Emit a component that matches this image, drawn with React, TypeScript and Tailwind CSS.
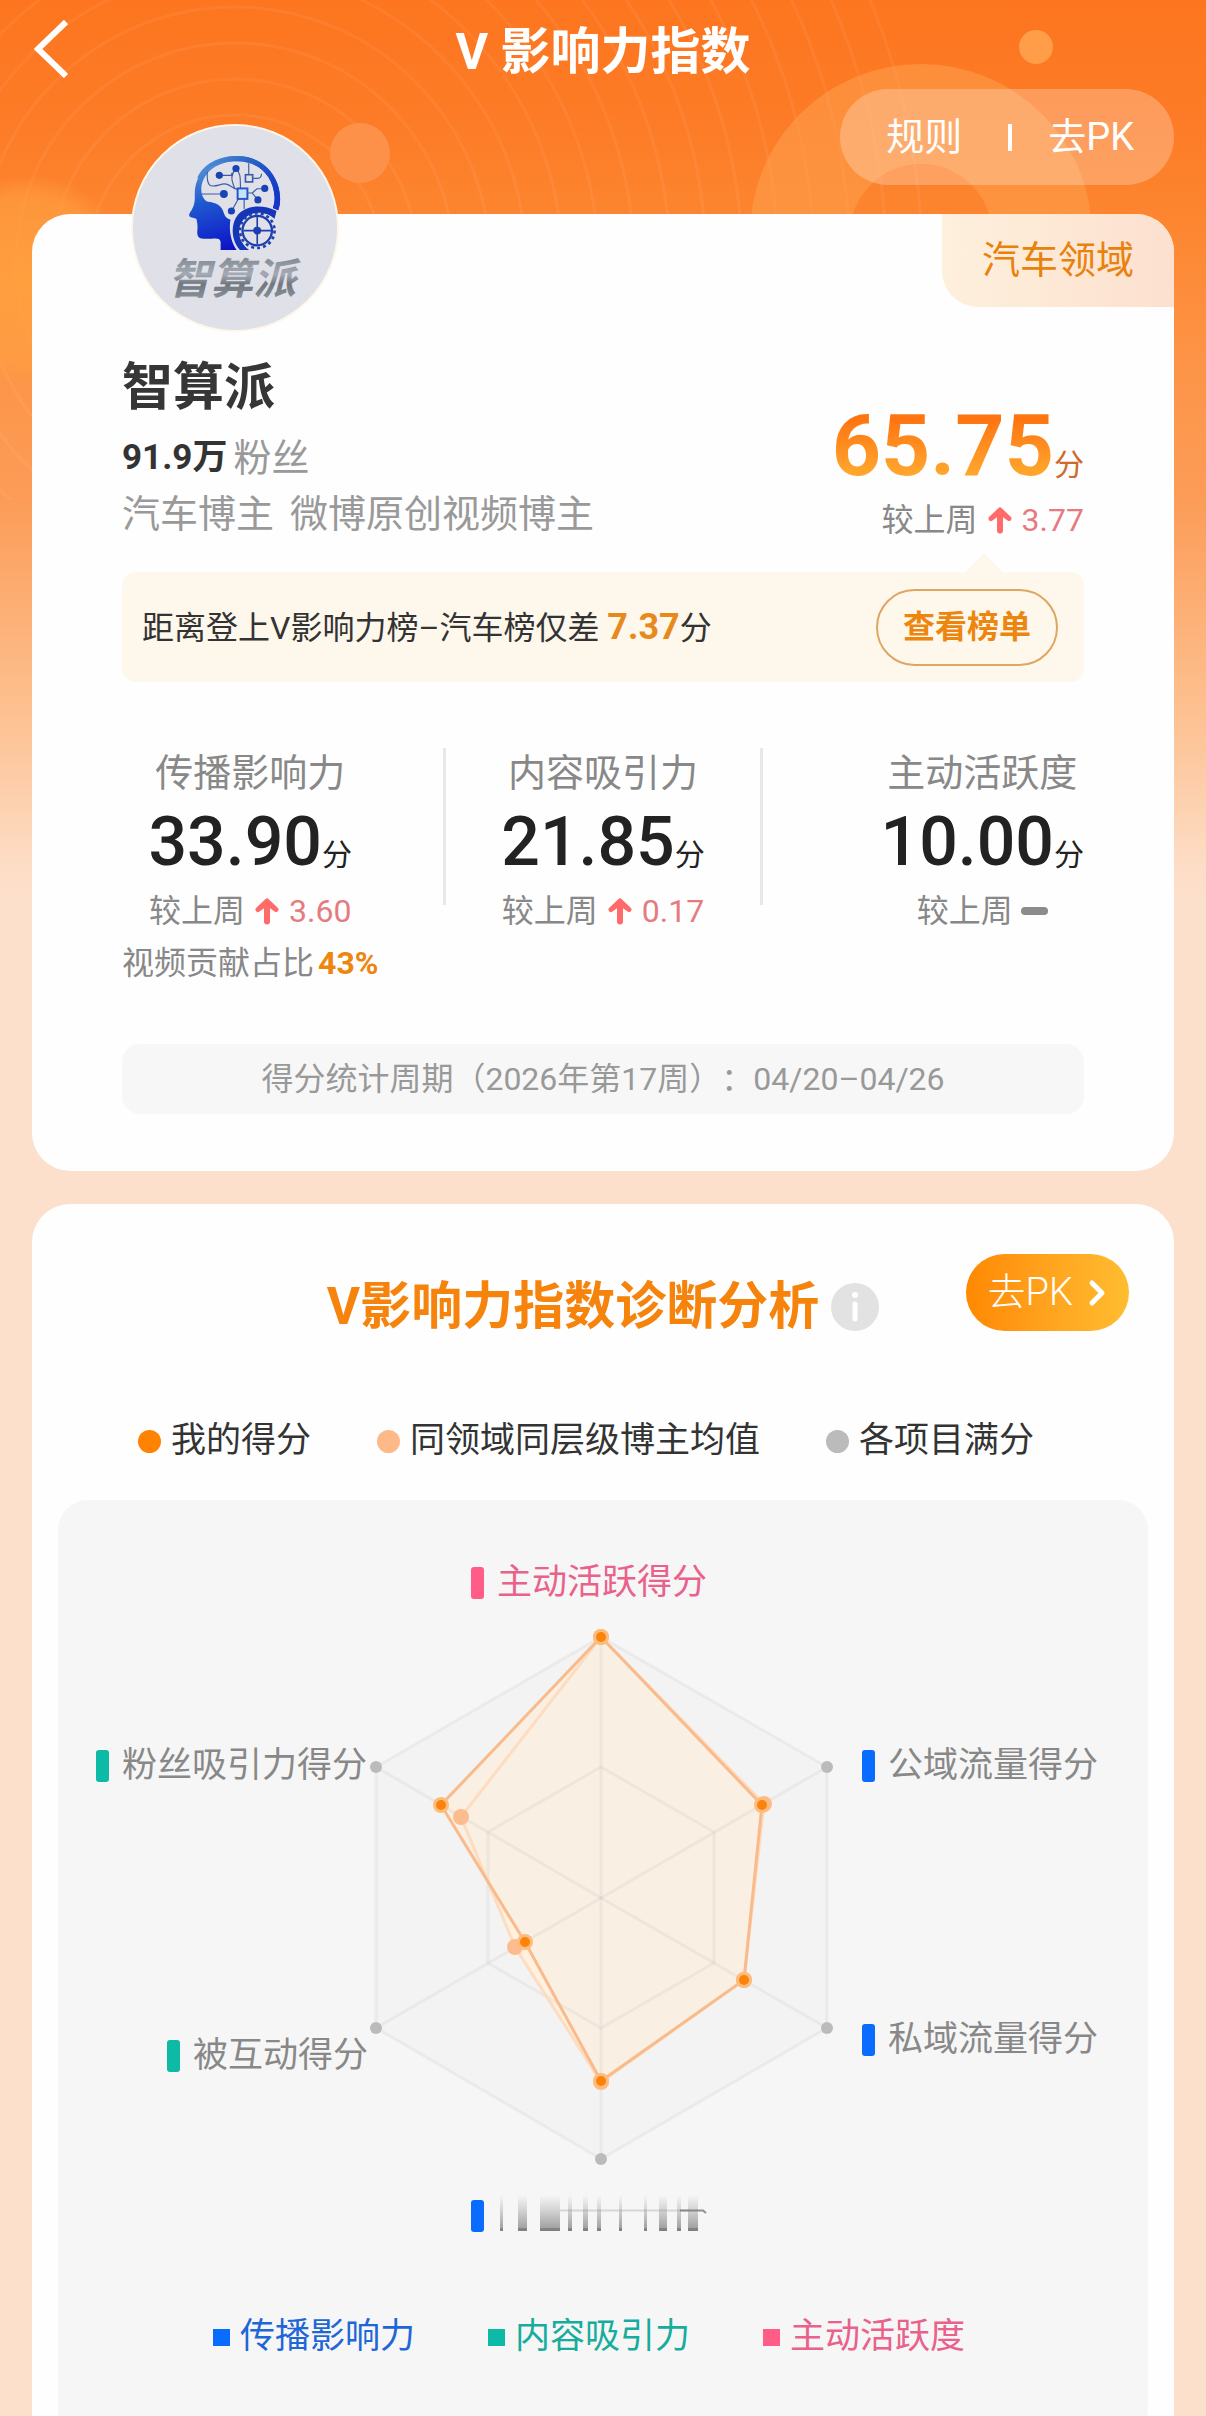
import { ChevronRight } from "lucide-react";

interface Metric {
  label: string;
  value: string;
  change: string | null;
}

interface LegendItem {
  label: string;
  dot: string;
  text: string;
}

interface AxisLabel {
  label: string;
  x: number;
  y: number;
  marker: string;
  color: string;
}

const metrics: Metric[] = [
  { label: "传播影响力", value: "33.90", change: "3.60" },
  { label: "内容吸引力", value: "21.85", change: "0.17" },
  { label: "主动活跃度", value: "10.00", change: null },
];

const scoreLegend: LegendItem[] = [
  { label: "我的得分", dot: "bg-[#ff8200]", text: "text-[#333333]" },
  { label: "同领域同层级博主均值", dot: "bg-[#fdb988]", text: "text-[#333333]" },
  { label: "各项目满分", dot: "bg-[#bbbbbb]", text: "text-[#333333]" },
];

const groupLegend: LegendItem[] = [
  { label: "传播影响力", dot: "bg-[#0a6cff]", text: "text-[#1f66d6]" },
  { label: "内容吸引力", dot: "bg-[#0cbaa6]", text: "text-[#17ac9c]" },
  { label: "主动活跃度", dot: "bg-[#ff5c87]", text: "text-[#e8628c]" },
];

const axisLabels: AxisLabel[] = [
  { label: "主动活跃得分", x: 413, y: 81, marker: "#ff5c87", color: "#e8628c" },
  { label: "公域流量得分", x: 804, y: 264, marker: "#0a6cff", color: "#888888" },
  { label: "私域流量得分", x: 804, y: 538, marker: "#0a6cff", color: "#888888" },
  { label: "被互动得分", x: 109, y: 554, marker: "#0cbaa6", color: "#888888" },
  { label: "粉丝吸引力得分", x: 38, y: 264, marker: "#0cbaa6", color: "#888888" },
];

const fullPoints = [[543, 137], [769, 267], [769, 528], [543, 659], [318, 528], [318, 267]];
const halfPoints = [[543, 267], [656, 332], [656, 463], [543, 528], [430, 463], [430, 332]];
const myPoints = [[543, 137], [704, 305], [686, 480], [543, 581], [467, 442], [383, 305]];
const averagePoints = [[543, 137], [706, 304], [686, 480], [543, 582], [457, 447], [403, 317]];

// Columns of the hidden sixth axis label: [x, width]
const smearBars = [
  [500, 3], [518, 9], [540, 20], [568, 4], [583, 5], [597, 4],
  [619, 3], [644, 3], [659, 8], [677, 4], [688, 10],
];

const toPath = (points: number[][]) => points.map((p) => p.join(",")).join(" ");

function Backdrop() {
  return (
    <div className="absolute inset-x-0 top-0 h-[900px] overflow-hidden bg-[linear-gradient(180deg,#fd751f_0px,#fd7c27_130px,#fd852f_213px,#fd9345_350px,#fc9c58_500px,#fdbd8a_690px,#fdc599_740px,#fddcc4_860px,#fde0cc_900px)]">
      <svg className="absolute top-0 left-0" width="1206" height="500" viewBox="0 0 1206 500" aria-hidden="true">
        <defs>
          <radialGradient id="glow">
            <stop offset="0" stopColor="#ffa23f" stopOpacity="0.9" />
            <stop offset="0.8" stopColor="#ffa042" stopOpacity="0.6" />
            <stop offset="1" stopColor="#ffa042" stopOpacity="0" />
          </radialGradient>
        </defs>
        <g fill="none" stroke="#ffffff" strokeOpacity="0.06" strokeWidth="3">
          {Array.from({ length: 16 }, (_, i) => (
            <circle key={i} cx="235" cy="262" r={147 + i * 36} />
          ))}
        </g>
        <circle cx="28" cy="280" r="105" fill="url(#glow)" />
        <circle cx="360" cy="153" r="30" fill="#fe9149" />
        <circle cx="921" cy="235" r="121" fill="none" stroke="#fda04f" strokeOpacity="0.55" strokeWidth="100" />
        <circle cx="1036" cy="47" r="17" fill="#ff9d49" />
      </svg>
    </div>
  );
}

function AvatarLogo() {
  return (
    <svg className="h-full w-full rounded-full" viewBox="-87 -48 624 624" role="img" aria-label="智算派">
      <defs>
        <linearGradient id="head" x1="0.2" y1="0" x2="0.5" y2="1">
          <stop offset="0" stopColor="#5fa0de" />
          <stop offset="0.45" stopColor="#1e58cf" />
          <stop offset="1" stopColor="#0d10c8" />
        </linearGradient>
        <linearGradient id="rim" x1="0" y1="0" x2="1" y2="0.6">
          <stop offset="0" stopColor="#5b9bdc" />
          <stop offset="0.5" stopColor="#2a64c4" />
          <stop offset="1" stopColor="#1437c9" />
        </linearGradient>
        <linearGradient id="metal" x1="0" y1="0" x2="0" y2="1">
          <stop offset="0" stopColor="#7d858f" />
          <stop offset="0.4" stopColor="#a4abb4" />
          <stop offset="0.6" stopColor="#70777f" />
          <stop offset="1" stopColor="#9299a2" />
        </linearGradient>
      </defs>
      <rect x="-87" y="-48" width="624" height="624" fill="#e0e1e8" />
      <path
        d="M102 165 C100 98 150 44 232 44 C310 44 363 105 363 175 C363 188 361 200 357 210 L341 203 C345 190 347 180 346 168 C342 105 298 60 232 60 C172 60 128 92 122 140 C121 162 128 178 142 184 C165 186 184 194 190 216 C195 232 202 236 211 238 C206 270 212 306 230 331 L181 331 L181 306 C178 295 168 296 154 297 L128 297 C112 296 108 286 110 270 C111 258 110 250 107 236 L88 230 C83 227 84 222 88 216 C97 203 103 190 102 165 Z"
        fill="url(#head)"
      />
      <path
        d="M110 110 C128 68 176 44 232 44 C310 44 363 105 363 175 C363 188 361 200 357 210 L341 203 C345 190 347 180 346 168 C342 105 298 60 232 60 C172 60 128 80 118 120 Z"
        fill="url(#rim)"
      />
      <g fill="none" stroke="#3a5aa8" strokeWidth="3.5">
        <path d="M178 103 H215 L215 95 M140 92 C138 140 150 140 178 132 C205 122 210 140 232 146 M123 160 H182" />
        <path d="M228 82 C212 100 212 115 224 142 M228 82 C245 100 240 115 242 142 M267 66 V100 M281 112 H294 Q306 112 306 98" />
        <path d="M263 157 H278 L292 144 H306 M278 157 L290 172 M253 174 V206 M238 170 L218 206" />
        <rect x="257" y="101" width="22" height="22" strokeWidth="5" />
        <rect x="233" y="143" width="30" height="32" strokeWidth="6" stroke="#2355c8" fill="#c9e2fb" />
      </g>
      <g fill="#1743b4">
        <circle cx="177" cy="103" r="11" />
        <circle cx="228" cy="82" r="11" />
        <circle cx="191" cy="160" r="12" />
        <circle cx="316" cy="143" r="11" />
        <circle cx="295" cy="178" r="11" />
        <circle cx="214" cy="212" r="11" />
      </g>
      <path d="M268 331 H240 C218 307 212 270 224 240 C242 198 300 186 352 212 L346 236 C320 212 268 208 246 246 C228 276 240 310 268 331 Z" fill="#1636b8" />
      <circle cx="293" cy="272" r="53" fill="none" stroke="#1d3fae" strokeWidth="8" strokeDasharray="9 9.5" />
      <circle cx="293" cy="272" r="45" fill="none" stroke="#1d3fae" strokeWidth="7" />
      <path d="M293 230 V314 M251 272 H335" stroke="#1d3fae" strokeWidth="5" />
      <circle cx="293" cy="272" r="12" fill="#1d3fae" />
      <text x="216" y="465" textAnchor="middle" fill="url(#metal)" className="text-[130px] font-bold italic">
        智算派
      </text>
    </svg>
  );
}

function UpArrow() {
  return (
    <svg className="h-7 w-6 shrink-0" viewBox="0 0 24 28" fill="none" stroke="#ff6b68" strokeLinecap="round" strokeLinejoin="round" aria-hidden="true">
      <path d="M12 24.5V6" strokeWidth="6" />
      <path d="M3 12.5L12 4L21 12.5L12 6Z" fill="#ff6b68" strokeWidth="5" />
    </svg>
  );
}

function WeekChange({ change }: { change: string | null }) {
  return (
    <div className="flex h-11 items-center text-[32px] text-[#888888]">
      <span>较上周</span>
      {change ? (
        <>
          <span className="mx-2.5 flex">
            <UpArrow />
          </span>
          <span className="text-[#e57b80]">{change}</span>
        </>
      ) : (
        <span className="ml-2 h-2 w-[27px] rounded-full bg-[#8c8c8c]" />
      )}
    </div>
  );
}

function MetricBlock({ metric }: { metric: Metric }) {
  return (
    <div className="flex flex-col items-center whitespace-nowrap">
      <h3 className="text-[38px] leading-[50px] text-[#888888]">{metric.label}</h3>
      <p className="mt-2.5 flex items-baseline leading-[68px] text-[#222222]">
        <span className="text-[68px] font-medium">{metric.value}</span>
        <span className="text-[30px]">分</span>
      </p>
      <WeekChange change={metric.change} />
    </div>
  );
}

function ProfileCard() {
  return (
    <section className="relative mx-8 mt-[29px] rounded-[38px] bg-[#fefefe] px-[90px] pb-[57px]">
      <span className="absolute top-0 right-0 flex h-[93px] items-center rounded-tr-[38px] rounded-bl-[36px] bg-linear-to-r from-[#fdf0dc] to-[#fde0cf] px-10 text-[38px] text-[#e8820c]">
        汽车领域
      </span>

      <div className="-mt-[90px] ml-[9px] inline-block size-[208px] overflow-hidden rounded-full border-2 border-[#fff6ea] bg-[#e0e1e8] align-top">
        <AvatarLogo />
      </div>

      <div className="mt-5 flex items-end justify-between">
        <div>
          <h2 className="text-[51px] leading-[72px] font-bold text-[#363636]">智算派</h2>
          <p className="mt-1.5 flex items-center gap-1.5 text-[38px] leading-[56px] text-[#999999]">
            <span className="text-[35px] font-bold text-[#333333]">91.9万</span>
            粉丝
          </p>
          <p className="flex gap-4 text-[38px] leading-[56px] text-[#999999]">
            <span>汽车博主</span>
            <span>微博原创视频博主</span>
          </p>
        </div>
        <div className="flex flex-col items-end">
          <p className="flex items-baseline leading-[66px]">
            <span className="bg-linear-to-b from-[#fd7410] from-10% to-[#ffa52c] to-90% bg-clip-text text-[86px] font-bold text-transparent">
              65.75
            </span>
            <span className="text-[30px] text-[#d0692c]">分</span>
          </p>
          <WeekChange change="3.77" />
        </div>
      </div>

      <div className="relative mt-[30px] flex h-[110px] items-center justify-between rounded-[14px] bg-[#fef7ec] pr-[26px] pl-5">
        <svg className="absolute -top-[18px] right-20" width="40" height="19" viewBox="0 0 40 19" aria-hidden="true">
          <path d="M0 19 L18 1 Q20 -1 22 1 L40 19 Z" fill="#fef7ec" />
        </svg>
        <p className="text-[32px] text-[#333333]">
          距离登上V影响力榜–汽车榜仅差 <span className="text-[36px] font-bold text-[#e8891c]">7.37</span>分
        </p>
        <button className="h-[77px] rounded-full border-2 border-[#dfa562] px-[25px] text-[32px] font-bold text-[#ec860f]">
          查看榜单
        </button>
      </div>

      <div className="mt-[66px] grid grid-cols-3">
        <div className="w-fit">
          <MetricBlock metric={metrics[0]} />
          <p className="mt-2 flex items-center gap-1 text-[32px] leading-[44px] text-[#888888]">
            视频贡献占比
            <span className="font-bold text-[#ec860f]">43%</span>
          </p>
        </div>
        <div className="h-[157px] border-x-3 border-[#e8e8e8]">
          <MetricBlock metric={metrics[1]} />
        </div>
        <div className="justify-self-end">
          <MetricBlock metric={metrics[2]} />
        </div>
      </div>

      <p className="mt-[59px] rounded-[18px] bg-[#f7f7f7] text-center text-[32px] leading-[70px] text-[#999999] [text-spacing-trim:space-all]">
        得分统计周期（2026年第17周）：04/20–04/26
      </p>
    </section>
  );
}

function RadarChart() {
  return (
    <svg className="w-full" viewBox="0 0 1090 760" role="img" aria-label="V影响力指数诊断分析">
      <defs>
        <linearGradient id="smear" x1="0" y1="0" x2="0" y2="1">
          <stop offset="0" stopColor="#999999" stopOpacity="0" />
          <stop offset="1" stopColor="#888888" stopOpacity="0.85" />
        </linearGradient>
      </defs>
      <polygon points={toPath(fullPoints)} fill="#f3f3f3" />
      <polygon points={toPath(averagePoints)} fill="#fff0e0" />
      <polygon points={toPath(myPoints)} fill="#f9efe3" />
      <g fill="none" stroke="#777777" strokeOpacity="0.07" strokeWidth="3">
        <polygon points={toPath(fullPoints)} />
        <polygon points={toPath(halfPoints)} />
        {fullPoints.map(([x, y]) => (
          <line key={`${x}-${y}`} x1="543" y1="398" x2={x} y2={y} />
        ))}
      </g>
      {fullPoints.map(([x, y]) => (
        <circle key={`${x}-${y}`} cx={x} cy={y} r="6" fill="#bbbbbb" />
      ))}
      <polygon points={toPath(averagePoints)} fill="none" stroke="#fddcc0" strokeWidth="3" />
      {averagePoints.map(([x, y]) => (
        <circle key={`${x}-${y}`} cx={x} cy={y} r="8" fill="#fdbc8e" />
      ))}
      <polygon points={toPath(myPoints)} fill="none" stroke="#f9bb8b" strokeWidth="3" />
      {myPoints.map(([x, y]) => (
        <g key={`${x}-${y}`}>
          <circle cx={x} cy={y} r="8" fill="#fdbc7c" />
          <circle cx={x} cy={y} r="5" fill="#fb830c" />
        </g>
      ))}
      {axisLabels.map((axis) => (
        <g key={axis.label}>
          <rect x={axis.x} y={axis.y - 14} width="13" height="32" rx="3" fill={axis.marker} />
          <text x={axis.x + 26} y={axis.y + 13} fill={axis.color} className="text-[35px]">
            {axis.label}
          </text>
        </g>
      ))}
      <rect x="413" y="700" width="13" height="32" rx="3" fill="#0a6cff" />
      {/* Obscured axis label */}
      <g transform="translate(-58 0)">
        {smearBars.map(([x, width]) => (
          <g key={x}>
            <rect x={x} y="695" width={width} height="36" fill="url(#smear)" />
            <rect x={x} y="728" width={width} height="3" rx="1" fill="#6f6f6f" fillOpacity="0.6" />
          </g>
        ))}
        <path d="M560 710.5 H690" fill="none" stroke="#8a8a8a" strokeOpacity="0.3" strokeWidth="2" />
        <path d="M680 710.5 H703 L706 713" fill="none" stroke="#777777" strokeOpacity="0.8" strokeWidth="2" />
      </g>
    </svg>
  );
}

function AnalysisCard() {
  return (
    <section className="mx-8 mt-[33px] rounded-[38px] bg-[#fefefe] px-[26px] pt-[50px] pb-10">
      <div className="grid grid-cols-[1fr_auto_1fr] items-start px-[19px]">
        <span />
        <div className="mt-3.5 flex items-center gap-3">
          <h2 className="text-[51px] leading-[78px] font-bold text-[#f5830c]">V影响力指数诊断分析</h2>
          <button aria-label="说明">
            <svg className="size-12" viewBox="0 0 48 48" aria-hidden="true">
              <circle cx="24" cy="24" r="24" fill="#e2e2e2" />
              <circle cx="24" cy="12" r="3" fill="#ffffff" />
              <path d="M24 21V36" stroke="#ffffff" strokeWidth="5" strokeLinecap="round" />
            </svg>
          </button>
        </div>
        <button className="flex h-[77px] items-center justify-self-end rounded-full bg-linear-to-r from-[#ff8800] to-[#ffbd30] pr-3 pl-[22px] text-[38px] font-light text-white">
          去PK
          <ChevronRight className="ml-1 size-10" strokeWidth={3} />
        </button>
      </div>

      <ul className="mt-[69px] flex justify-center gap-[66px] pr-[34px] text-[35px] leading-[52px]">
        {scoreLegend.map((item) => (
          <li key={item.label} className={`flex items-center gap-2.5 ${item.text}`}>
            <span className={`size-[23px] rounded-full ${item.dot}`} />
            {item.label}
          </li>
        ))}
      </ul>

      <div className="mt-[33px] rounded-[30px] bg-[#f6f6f6] pb-[76px]">
        <RadarChart />
        <ul className="mt-[51px] flex justify-center gap-[73px] pr-7 text-[35px] leading-[52px]">
          {groupLegend.map((item) => (
            <li key={item.label} className={`flex items-center gap-2.5 ${item.text}`}>
              <span className={`size-[17px] ${item.dot}`} />
              {item.label}
            </li>
          ))}
        </ul>
      </div>
    </section>
  );
}

export default function App() {
  return (
    <main className="relative h-screen overflow-hidden bg-[#fde0cc] font-[Roboto,'Noto_Sans_CJK_SC',sans-serif]">
      <Backdrop />
      <div className="relative">
        <header className="grid h-[89px] grid-cols-[1fr_auto_1fr] items-center px-8 pt-4 text-white">
          <button aria-label="返回" className="mb-2 justify-self-start">
            <svg className="h-[58px] w-9" viewBox="0 0 36 58" fill="none" stroke="currentColor" strokeWidth="6" aria-hidden="true">
              <path d="M34 2L6 29L34 56" />
            </svg>
          </button>
          <h1 className="text-[50px] leading-[73px] font-bold">V 影响力指数</h1>
          <span />
        </header>

        <div className="flex justify-end px-8">
          <nav className="flex h-24 items-center rounded-full bg-white/25 pr-10 pl-[46px] text-[38px] text-white">
            <a href="#rules">规则</a>
            <span className="mr-9 ml-[46px] h-[27px] w-1 bg-white" />
            <a href="#pk">去PK</a>
          </nav>
        </div>

        <ProfileCard />
        <AnalysisCard />
      </div>
    </main>
  );
}
